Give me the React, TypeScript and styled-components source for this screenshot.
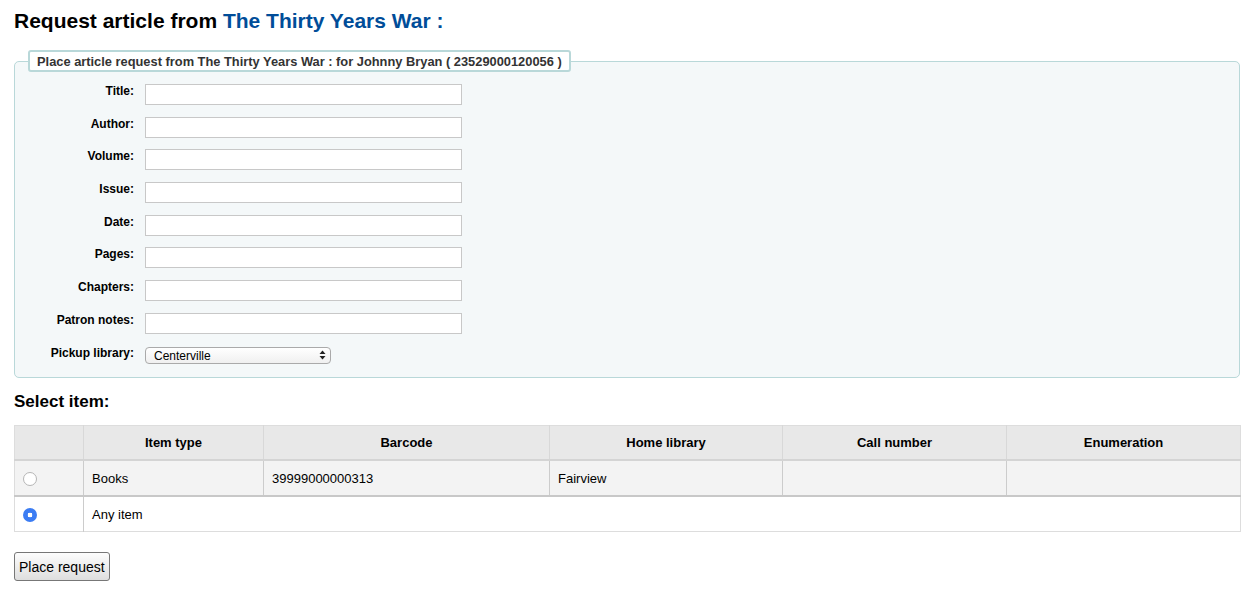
import styled, { createGlobalStyle } from "styled-components";

const GlobalStyle = createGlobalStyle`
  body {
    margin: 0;
    background: #fff;
    font-family: "Liberation Sans", Arial, sans-serif;
    color: #000;
  }
`;

const Page = styled.div`
  padding: 8px 7px 16px 14px;
`;

const Heading = styled.h1`
  margin: 0 0 17px;
  font-size: 21px;
  line-height: 25px;
  font-weight: bold;
  color: #000;
  a {
    color: #004d99;
    text-decoration: none;
  }
`;

const Fieldset = styled.fieldset`
  margin: 0;
  padding: 0 13px 14px;
  background: #f4f8f9;
  border: 1px solid #b9d8d9;
  border-radius: 5px;
`;

const Legend = styled.legend`
  padding: 1.5px 7px;
  background: #fff;
  border: 2px solid #b9d8d9;
  border-radius: 3px;
  font-size: 12.85px;
  line-height: 15px;
  font-weight: bold;
  color: #333;
`;

const FormGrid = styled.div`
  display: grid;
  grid-template-columns: 106px auto;
  column-gap: 11px;
  row-gap: 11.7px;
  padding-top: 12px;
  align-items: start;
  justify-content: start;
`;

const Label = styled.label`
  text-align: right;
  font-size: 12px;
  line-height: 14px;
  font-weight: bold;
  color: #000;
`;

const TextInput = styled.input`
  box-sizing: border-box;
  width: 317px;
  height: 21px;
  margin: 0;
  padding: 2px 4px;
  border: 1px solid #c8c8c8;
  background: #fff;
  font: 12px "Liberation Sans", Arial, sans-serif;
`;

const SelectWrap = styled.span`
  position: relative;
  display: inline-block;
  width: 186px;
  height: 17px;
`;

const Select = styled.select`
  appearance: none;
  box-sizing: border-box;
  width: 100%;
  height: 17px;
  margin: 0;
  padding: 0 20px 0 8px;
  border: 1px solid #aaa;
  border-radius: 4px;
  background: linear-gradient(#fff, #f0f0f0);
  font: 12px "Liberation Sans", Arial, sans-serif;
  color: #000;
`;

const SelectArrows = styled.svg`
  position: absolute;
  right: 5px;
  top: 4px;
  pointer-events: none;
`;

const SubHeading = styled.h2`
  margin: 14px 0 13px;
  font-size: 17px;
  line-height: 20px;
  font-weight: bold;
`;

const Table = styled.table`
  width: 100%;
  border-collapse: collapse;
  table-layout: fixed;
  border: 1px solid #ddd;
  font-size: 13px;
`;

const Th = styled.th<{ $w: number }>`
  box-sizing: border-box;
  width: ${(p) => p.$w}px;
  height: 35px;
  padding: 0 8px;
  background: #e8e8e8;
  border-left: 1px solid #d8d8d8;
  border-bottom: 2px solid #d4d4d4;
  font-weight: bold;
  text-align: center;
  &:first-child {
    border-left: none;
  }
`;

const Row = styled.tr<{ $shaded?: boolean }>`
  background: ${(p) => (p.$shaded ? "#f3f3f3" : "#fff")};
  border-bottom: ${(p) => (p.$shaded ? "2px solid #c8c8c8" : "1px solid #ddd")};
`;

const Td = styled.td`
  height: 34px;
  padding: 0 8px;
  border-left: 1px solid #ccc;
  &:first-child {
    border-left: none;
  }
`;

const Radio = styled.input`
  appearance: none;
  box-sizing: border-box;
  width: 14px;
  height: 14px;
  margin: 4px 0 0;
  border-radius: 50%;
  border: 1px solid #b5b5b5;
  background: #fff;
  &:checked {
    border: none;
    background: radial-gradient(circle, #fff 0 2.2px, #3b7cf3 2.6px);
  }
`;

const Button = styled.button`
  margin-top: 20px;
  height: 29px;
  padding: 0 4px;
  border: 1px solid #777;
  border-radius: 3px;
  background: linear-gradient(#fdfdfd, #dedede);
  font: 14px "Liberation Sans", Arial, sans-serif;
  color: #000;
`;

const fields = ["Title", "Author", "Volume", "Issue", "Date", "Pages", "Chapters", "Patron notes"];

const columns = [
  { label: "", w: 69 },
  { label: "Item type", w: 180 },
  { label: "Barcode", w: 286 },
  { label: "Home library", w: 233 },
  { label: "Call number", w: 224 },
  { label: "Enumeration", w: 234 },
];

export default function App() {
  return (
    <Page>
      <GlobalStyle />
      <Heading>
        Request article from <a href="#">The Thirty Years War :</a>
      </Heading>
      <Fieldset>
        <Legend>Place article request from The Thirty Years War : for Johnny Bryan ( 23529000120056 )</Legend>
        <FormGrid>
          {fields.map((f) => (
            <>
              <Label key={f + "l"}>{f}:</Label>
              <TextInput key={f} type="text" />
            </>
          ))}
          <Label>Pickup library:</Label>
          <SelectWrap>
            <Select defaultValue="Centerville">
              <option>Centerville</option>
              <option>Fairview</option>
            </Select>
            <SelectArrows width="7" height="10" viewBox="0 0 7 10">
              <path d="M3.5 0.5 L6.5 4 L0.5 4 Z" fill="#222" />
              <path d="M3.5 9.5 L6.5 6 L0.5 6 Z" fill="#222" />
            </SelectArrows>
          </SelectWrap>
        </FormGrid>
      </Fieldset>
      <SubHeading>Select item:</SubHeading>
      <Table>
        <thead>
          <tr>
            {columns.map((c, i) => (
              <Th key={i} $w={c.w}>
                {c.label}
              </Th>
            ))}
          </tr>
        </thead>
        <tbody>
          <Row $shaded>
            <Td>
              <Radio type="radio" name="itemnumber" />
            </Td>
            <Td>Books</Td>
            <Td>39999000000313</Td>
            <Td>Fairview</Td>
            <Td></Td>
            <Td></Td>
          </Row>
          <Row>
            <Td>
              <Radio type="radio" name="itemnumber" defaultChecked />
            </Td>
            <Td colSpan={5}>Any item</Td>
          </Row>
        </tbody>
      </Table>
      <Button type="button">Place request</Button>
    </Page>
  );
}
